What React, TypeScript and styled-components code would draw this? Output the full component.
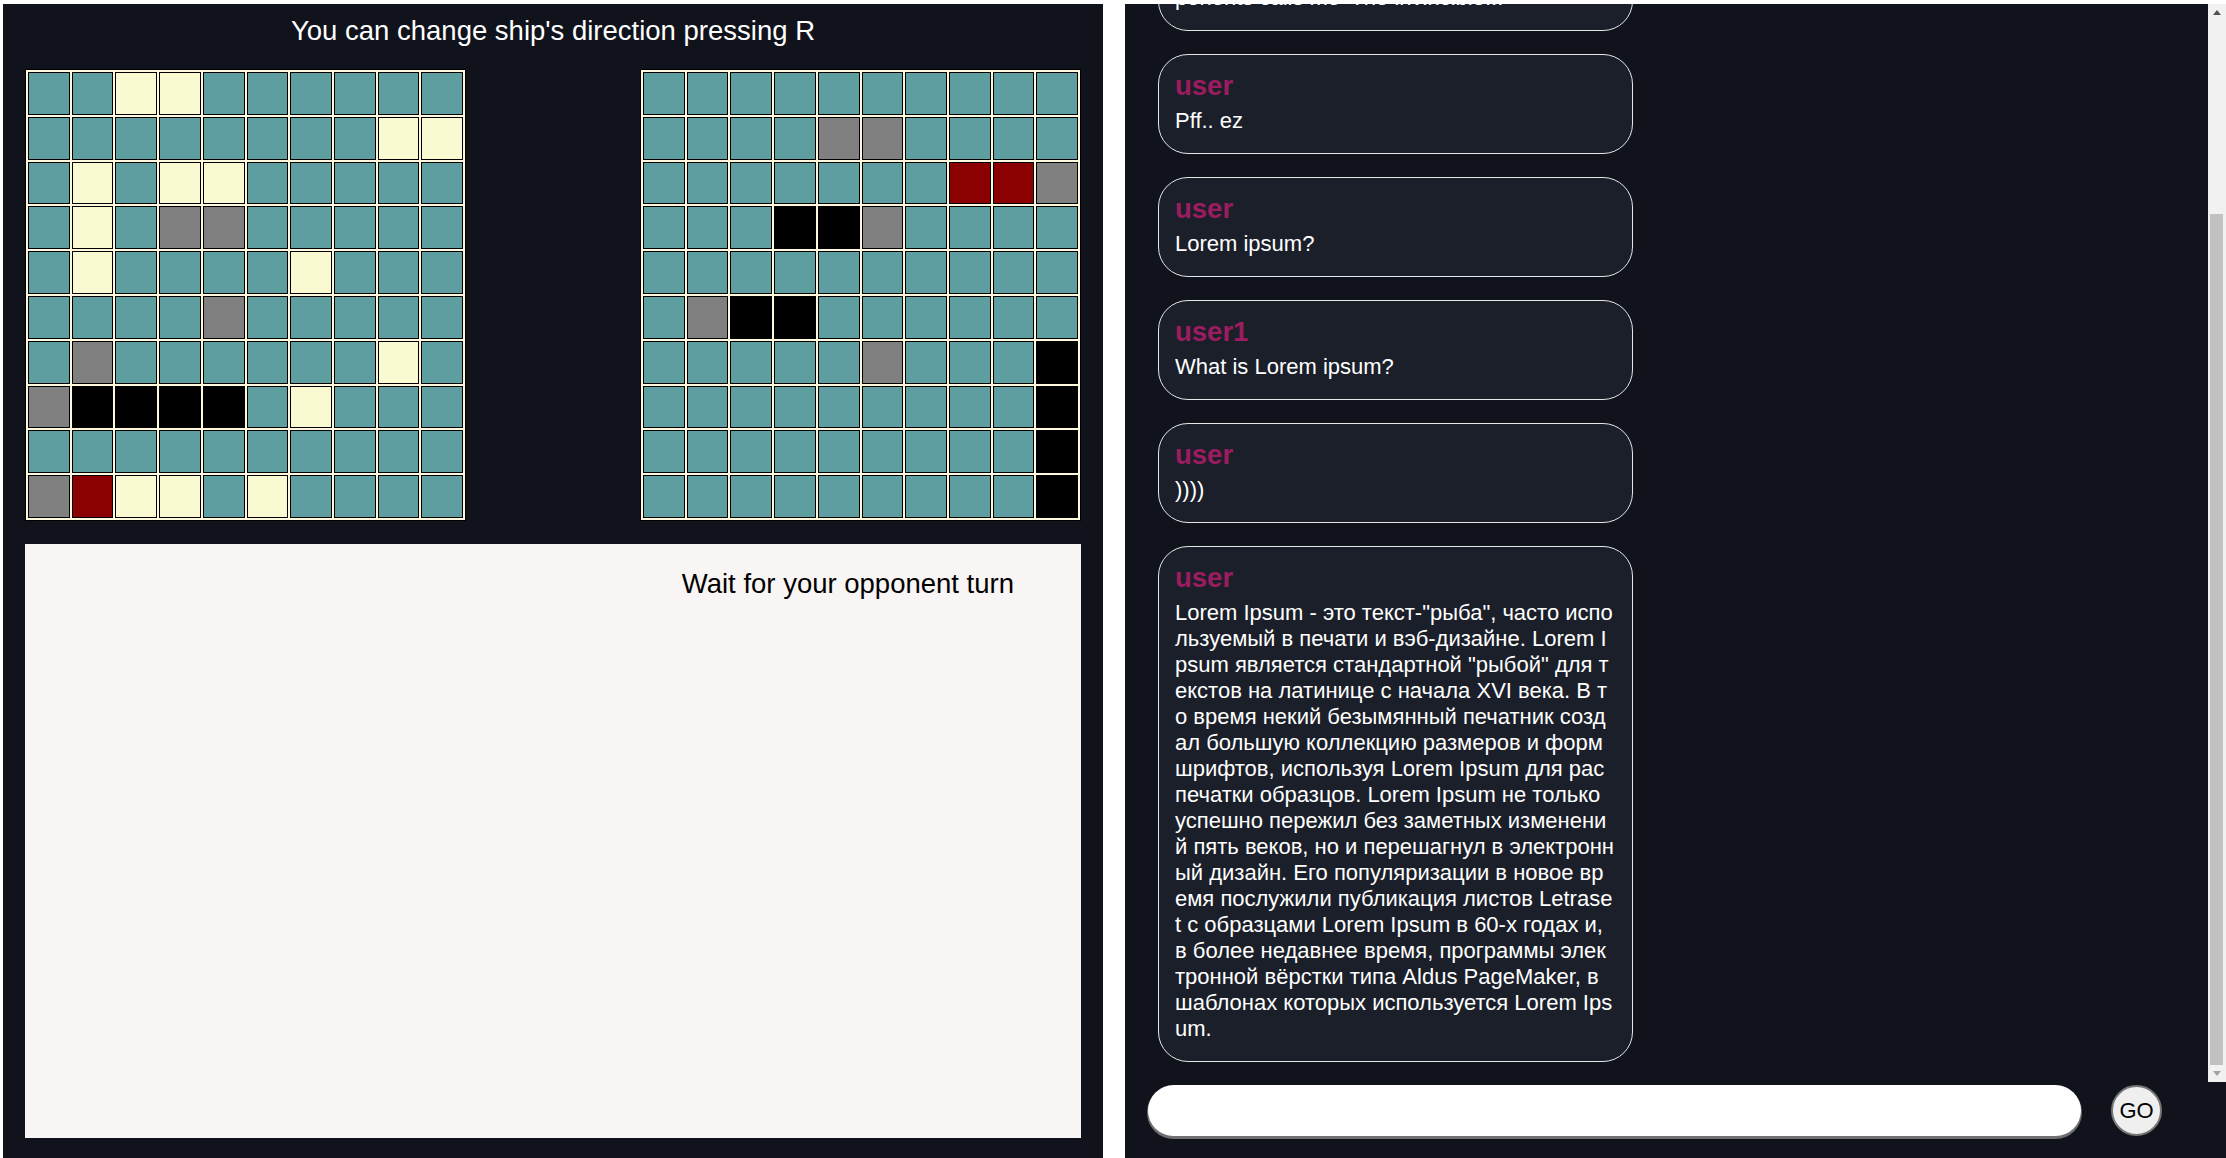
import { useEffect, useLayoutEffect, useRef, useState } from "react";
import styled, { createGlobalStyle } from "styled-components";

type CellKind = "sea" | "ship" | "miss" | "sunk" | "hit";

const cellColors: Record<CellKind, string> = {
  sea: "#5f9ea0",
  ship: "#fafad2",
  miss: "#808080",
  sunk: "#000000",
  hit: "#8b0000",
};

// . sea, s ship, m miss, x sunk, h hit
const myBoard = [
  "..ss......",
  "........ss",
  ".s.ss.....",
  ".s.mm.....",
  ".s....s...",
  "....m.....",
  ".m......s.",
  "mxxxx.s...",
  "..........",
  "mhss.s....",
];

const enemyBoard = [
  "..........",
  "....mm....",
  ".......hhm",
  "...xxm....",
  "..........",
  ".mxx......",
  ".....m...x",
  ".........x",
  ".........x",
  ".........x",
];

const charToKind: Record<string, CellKind> = {
  ".": "sea",
  s: "ship",
  m: "miss",
  x: "sunk",
  h: "hit",
};

const loremLines = [
  'Lorem Ipsum - это текст-"рыба", часто испо',
  'льзуемый в печати и вэб-дизайне. Lorem I',
  'psum является стандартной "рыбой" для т',
  "екстов на латинице с начала XVI века. В т",
  "о время некий безымянный печатник созд",
  "ал большую коллекцию размеров и форм",
  "шрифтов, используя Lorem Ipsum для рас",
  "печатки образцов. Lorem Ipsum не только",
  "успешно пережил без заметных изменени",
  "й пять веков, но и перешагнул в электронн",
  "ый дизайн. Его популяризации в новое вр",
  "емя послужили публикация листов Letrase",
  "t с образцами Lorem Ipsum в 60-х годах и,",
  "в более недавнее время, программы элек",
  "тронной вёрстки типа Aldus PageMaker, в",
  "шаблонах которых используется Lorem Ips",
  "um.",
];

const messages = [
  { user: "user1", text: "Hi! Ready to lose?" },
  { user: "user", text: "I never lose. My op\nponents calls me 'The invincible...'" },
  { user: "user", text: "Pff.. ez" },
  { user: "user", text: "Lorem ipsum?" },
  { user: "user1", text: "What is Lorem ipsum?" },
  { user: "user", text: "))))" },
  { user: "user", text: loremLines.join("\n") },
];

const GlobalStyle = createGlobalStyle`
  html, body {
    margin: 0;
    padding: 0;
    background: #ffffff;
  }
  body {
    font-family: "Liberation Sans", Arial, sans-serif;
    overflow: hidden;
  }
`;

const Page = styled.div`
  display: flex;
  gap: 22px;
  height: 1158px;
  padding: 4px 0 0 3px;
  box-sizing: border-box;
`;

const GamePanel = styled.main`
  width: 1100px;
  flex-shrink: 0;
  display: flex;
  flex-direction: column;
  padding: 0 22px;
  box-sizing: border-box;
  background: #10131b;
`;

const Title = styled.h1`
  margin: 0 0 22px;
  padding-top: 11px;
  font-size: 27.5px;
  font-weight: 400;
  line-height: 32px;
  text-align: center;
  color: #ffffff;
`;

const Boards = styled.div`
  display: flex;
  justify-content: space-between;
`;

const Board = styled.div`
  width: 441px;
  height: 452px;
  box-sizing: border-box;
  display: grid;
  grid-template-columns: repeat(10, 1fr);
  grid-template-rows: repeat(10, 1fr);
  gap: 2px;
  padding: 2px;
  border: 1px solid #000;
  background: #fff8dc;
`;

const Cell = styled.div<{ $kind: CellKind }>`
  box-sizing: border-box;
  border: 1px solid #000;
  background: ${(p) => cellColors[p.$kind]};
`;

const LogBox = styled.section`
  margin-top: 23px;
  height: 594px;
  display: flex;
  justify-content: flex-end;
  align-items: flex-start;
  padding: 24px 67px 0 0;
  box-sizing: border-box;
  background: #f9f5f4;
`;

const Status = styled.p`
  margin: 0;
  font-size: 27.5px;
  line-height: 32px;
  color: #000;
`;

const ChatPanel = styled.aside`
  flex: 1;
  min-width: 0;
  display: flex;
  flex-direction: column;
  background: #10131b;
`;

const ChatBody = styled.div`
  height: 1078px;
  flex-shrink: 0;
  display: flex;
`;

const MessageList = styled.div`
  flex: 1;
  overflow: hidden;
  display: flex;
  flex-direction: column;
  gap: 23px;
  padding: 23px 0 20px 33px;
  box-sizing: border-box;
`;

const ScrollTrack = styled.div`
  width: 18px;
  flex-shrink: 0;
  display: flex;
  flex-direction: column;
  background: #f1f1f1;
`;

const ScrollArrow = styled.div`
  height: 17px;
  flex-shrink: 0;
  display: flex;
  align-items: center;
  justify-content: center;
`;

const ScrollRail = styled.div`
  flex: 1;
  display: flex;
  flex-direction: column;
  justify-content: flex-end;
  padding: 0 3px 0 2px;
`;

const ScrollThumb = styled.div`
  background: #c1c1c1;
`;

const Bubble = styled.div`
  width: 475px;
  flex-shrink: 0;
  box-sizing: border-box;
  padding: 15px 16px 19px;
  border: 1px solid #e6e6e6;
  border-radius: 30px;
  background: #1b1f2a;
`;

const UserName = styled.div`
  margin-bottom: 6px;
  font-size: 27.5px;
  font-weight: 700;
  line-height: 32px;
  color: #9c1c5f;
`;

const MessageText = styled.div`
  font-size: 22px;
  line-height: 26px;
  color: #ffffff;
  white-space: pre-line;
  word-break: break-all;
`;

const InputRow = styled.form`
  flex: 1;
  display: flex;
  align-items: flex-start;
  gap: 30px;
  margin: 0;
  padding: 3px 0 0 23px;
`;

const MessageInput = styled.input`
  width: 933px;
  height: 51px;
  box-sizing: border-box;
  padding: 0 22px;
  border: none;
  border-radius: 26px;
  box-shadow: 0 2px 0 1px #707070;
  background: #ffffff;
  font-family: "Liberation Sans", Arial, sans-serif;
  font-size: 22px;
  color: #000;
  caret-color: #000;
  outline: none;
`;

const GoButton = styled.button`
  width: 51px;
  height: 51px;
  padding: 0;
  border: 2px solid #767676;
  border-radius: 50%;
  background: #efefef;
  font-family: "Liberation Sans", Arial, sans-serif;
  font-size: 22px;
  color: #000;
`;

const renderBoard = (rows: string[]) =>
  rows.flatMap((row, r) =>
    row.split("").map((ch, c) => <Cell key={`${r}-${c}`} $kind={charToKind[ch]} />)
  );

const Arrow = ({ up, color }: { up?: boolean; color: string }) => (
  <svg width="8" height="5" viewBox="0 0 8 5">
    <polygon points={up ? "0,5 4,0 8,5" : "0,0 4,5 8,0"} fill={color} />
  </svg>
);

const TRACK_LENGTH = 1078 - 34;

export default function App() {
  const listRef = useRef<HTMLDivElement>(null);
  const inputRef = useRef<HTMLInputElement>(null);
  const [thumb, setThumb] = useState(852);

  useLayoutEffect(() => {
    const el = listRef.current;
    if (!el) return;
    el.scrollTop = el.scrollHeight;
    setThumb(Math.round((TRACK_LENGTH * el.clientHeight) / el.scrollHeight));
  }, []);

  useEffect(() => {
    inputRef.current?.focus();
  }, []);

  return (
    <>
      <GlobalStyle />
      <Page>
        <GamePanel>
          <Title>You can change ship's direction pressing R</Title>
          <Boards>
            <Board>{renderBoard(myBoard)}</Board>
            <Board>{renderBoard(enemyBoard)}</Board>
          </Boards>
          <LogBox>
            <Status>Wait for your opponent turn</Status>
          </LogBox>
        </GamePanel>
        <ChatPanel>
          <ChatBody>
            <MessageList ref={listRef}>
              {messages.map((m, i) => (
                <Bubble key={i}>
                  <UserName>{m.user}</UserName>
                  <MessageText>{m.text}</MessageText>
                </Bubble>
              ))}
            </MessageList>
            <ScrollTrack>
              <ScrollArrow>
                <Arrow up color="#505050" />
              </ScrollArrow>
              <ScrollRail>
                <ScrollThumb style={{ height: thumb }} />
              </ScrollRail>
              <ScrollArrow>
                <Arrow color="#a3a3a3" />
              </ScrollArrow>
            </ScrollTrack>
          </ChatBody>
          <InputRow onSubmit={(e) => e.preventDefault()}>
            <MessageInput ref={inputRef} autoFocus />
            <GoButton type="submit">GO</GoButton>
          </InputRow>
        </ChatPanel>
      </Page>
    </>
  );
}
